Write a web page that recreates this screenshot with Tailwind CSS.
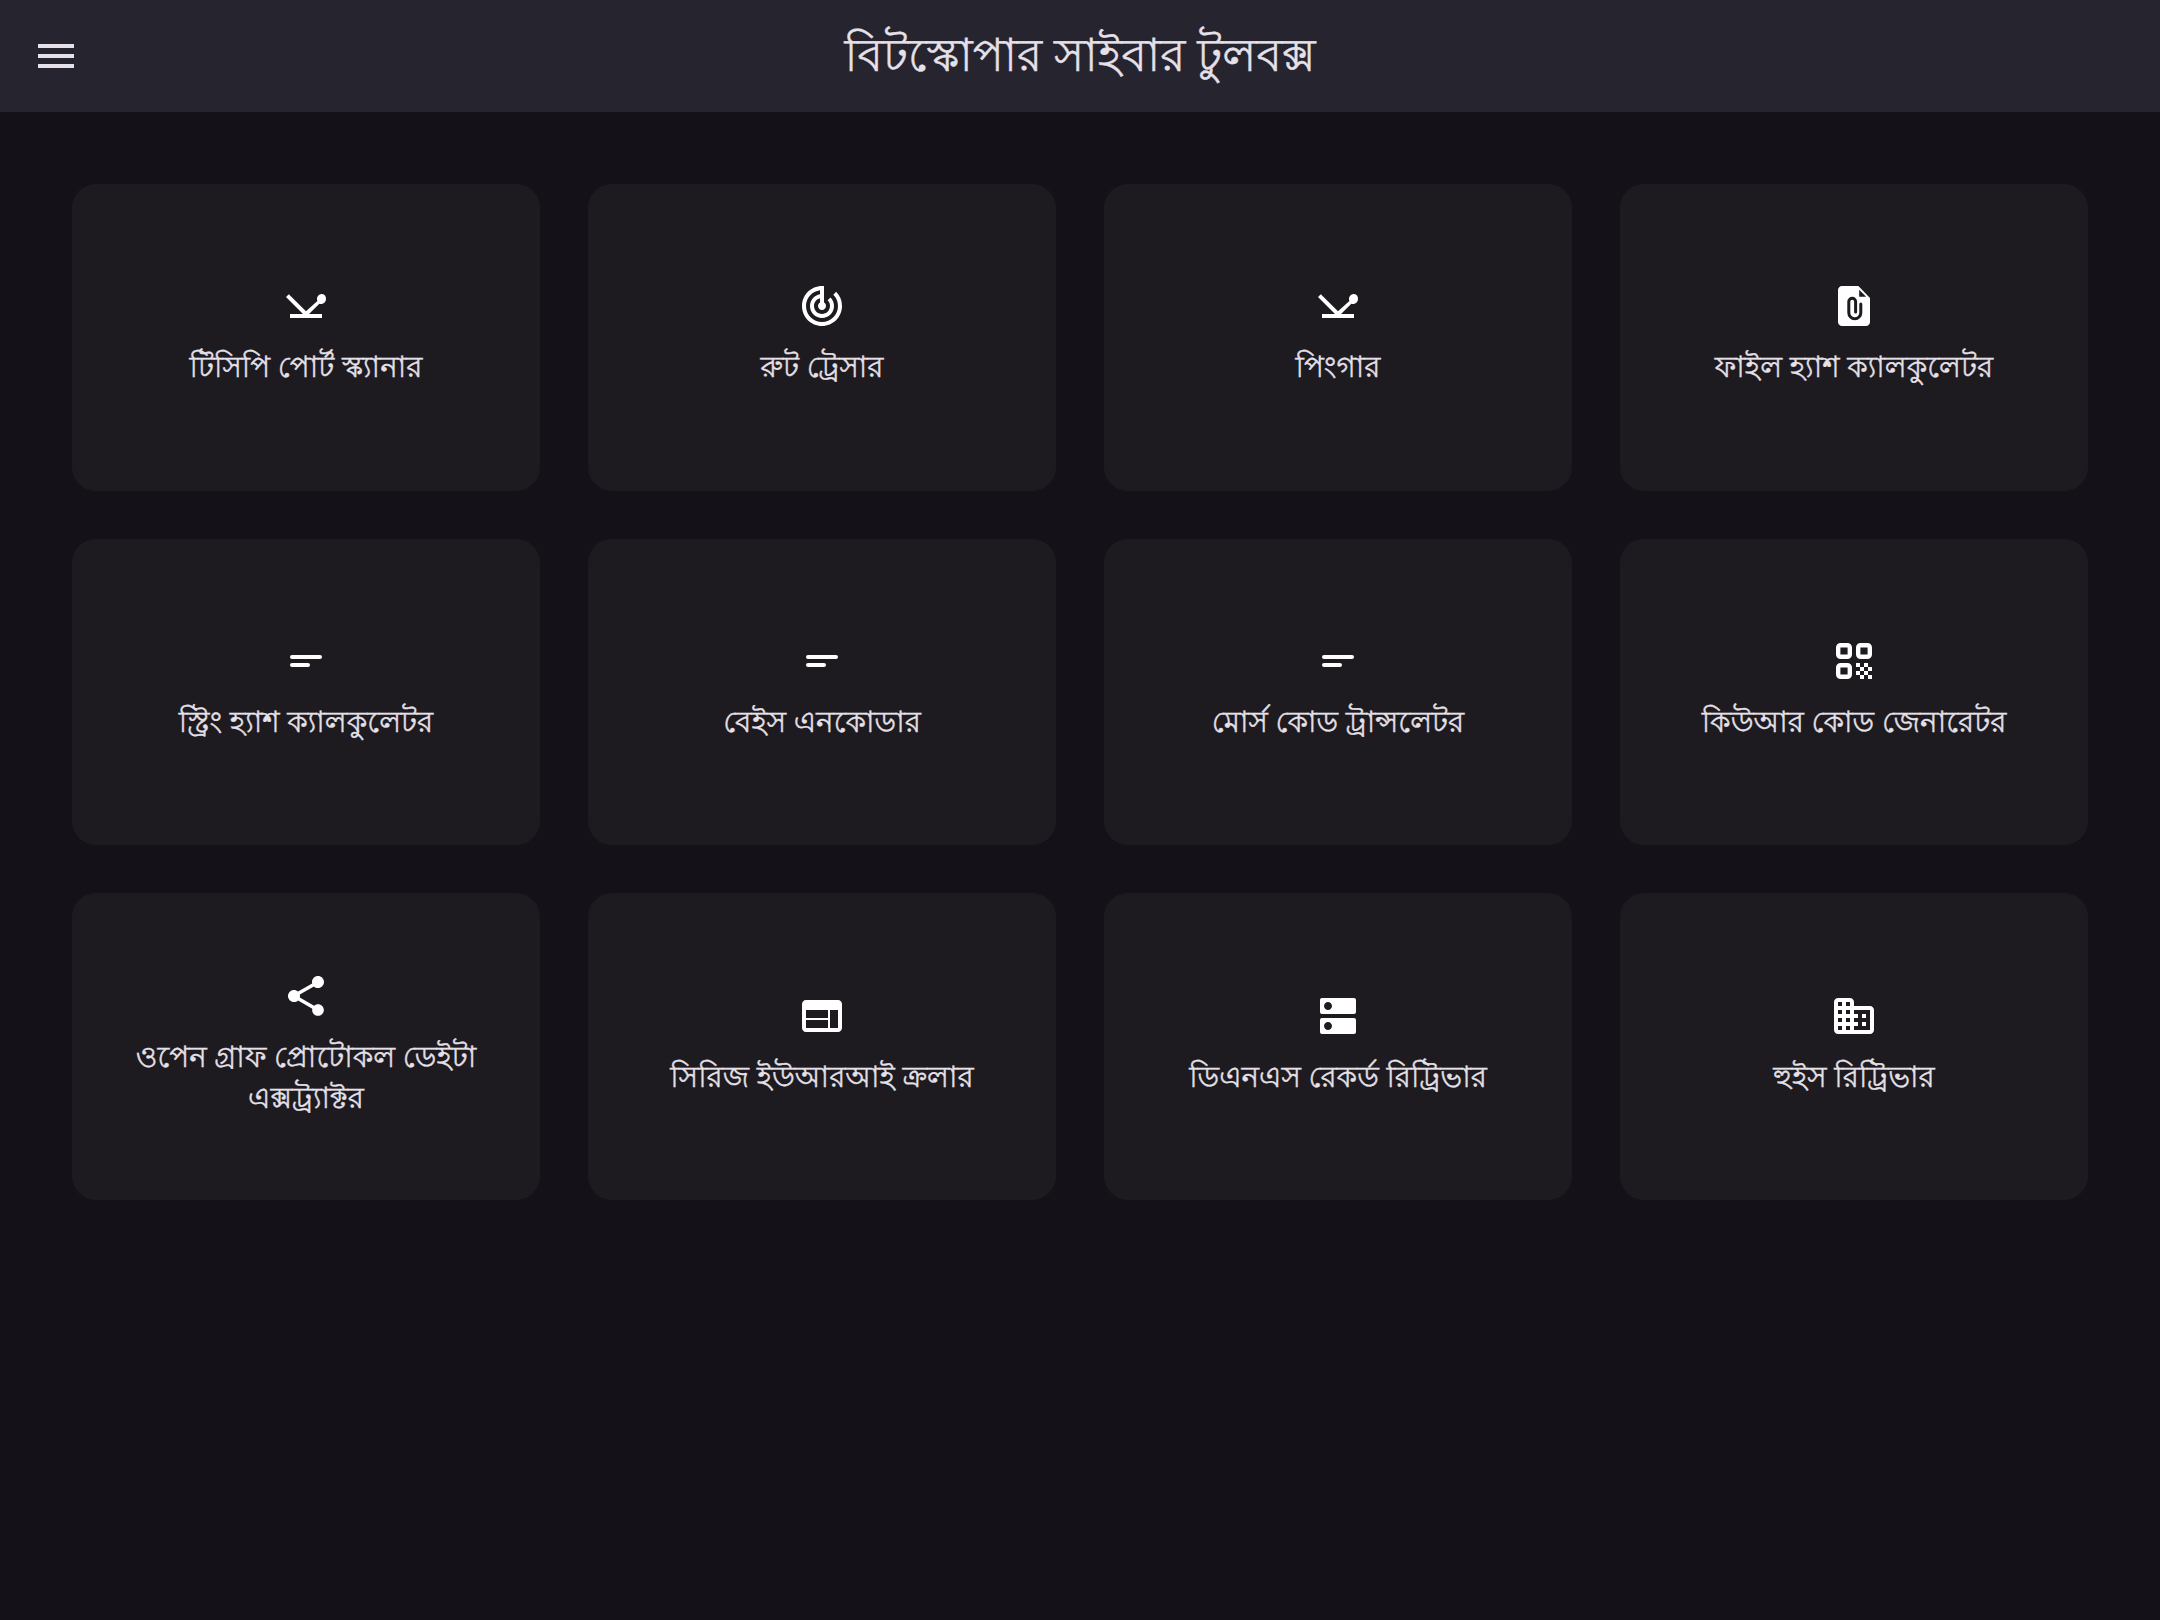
<!DOCTYPE html>
<html lang="bn">
<head>
  <meta charset="utf-8">
  <title>বিটস্কোপার সাইবার টুলবক্স</title>
  <script src="https://cdn.jsdelivr.net/npm/@tailwindcss/browser@4"></script>
</head>
<body class="min-h-[1620px] bg-[#141218] font-['Noto_Sans',sans-serif] text-[#e6e0e9] [text-rendering:geometricPrecision] [-webkit-text-stroke:0.4px]">

  <!-- top bar -->
  <header class="relative flex h-[112px] items-center justify-center bg-[#26242e]">
    <button class="absolute left-[38px] top-[44px] flex h-6 w-9 flex-col justify-between" aria-label="menu">
      <span class="h-1 w-full bg-[#e6e0e9]"></span>
      <span class="h-1 w-full bg-[#e6e0e9]"></span>
      <span class="h-1 w-full bg-[#e6e0e9]"></span>
    </button>
    <h1 class="pb-0.5 text-[45.8px] font-normal leading-none">বিটস্কোপার সাইবার টুলবক্স</h1>
  </header>

  <!-- tools -->
  <main class="grid grid-cols-4 gap-12 px-[72px] pt-[72px]">

    <a class="flex h-[306.5px] flex-col items-center justify-center gap-4 rounded-3xl bg-[#1d1b20] px-6 text-center text-[29.4px] leading-[41px]">
      <svg class="h-12 w-12 fill-white" viewBox="0 0 24 24"><path d="M12 14.67 3.41 6.09 2 7.5l8.5 8.5H4v2h16v-2h-6.5l5.15-5.15c.26.1.55.15.85.15 1.38 0 2.5-1.12 2.5-2.5S21.38 6 20 6s-2.5 1.12-2.5 2.5c0 .35.07.67.2.97L12 14.67z"/></svg>
      <span class="pb-1.5">টিসিপি পোর্ট স্ক্যানার</span>
    </a>

    <a class="flex h-[306.5px] flex-col items-center justify-center gap-4 rounded-3xl bg-[#1d1b20] px-6 text-center text-[29.4px] leading-[41px]">
      <svg class="h-12 w-12 fill-white" viewBox="0 0 24 24"><path d="M19.07 4.93l-1.41 1.41C19.1 7.79 20 9.79 20 12c0 4.42-3.58 8-8 8s-8-3.58-8-8c0-4.08 3.05-7.44 7-7.93v2.02C8.16 6.57 6 9.03 6 12c0 3.31 2.69 6 6 6s6-2.69 6-6c0-1.66-.67-3.16-1.76-4.24l-1.41 1.41C15.55 9.9 16 10.9 16 12c0 2.21-1.79 4-4 4s-4-1.79-4-4c0-1.86 1.28-3.41 3-3.86v2.14c-.6.35-1 .98-1 1.72 0 1.1.9 2 2 2s2-.9 2-2c0-.74-.4-1.38-1-1.72V2h-1C6.48 2 2 6.48 2 12s4.48 10 10 10 10-4.48 10-10c0-2.76-1.12-5.26-2.93-7.07z"/></svg>
      <span class="pb-1.5">রুট ট্রেসার</span>
    </a>

    <a class="flex h-[306.5px] flex-col items-center justify-center gap-4 rounded-3xl bg-[#1d1b20] px-6 text-center text-[29.4px] leading-[41px]">
      <svg class="h-12 w-12 fill-white" viewBox="0 0 24 24"><path d="M12 14.67 3.41 6.09 2 7.5l8.5 8.5H4v2h16v-2h-6.5l5.15-5.15c.26.1.55.15.85.15 1.38 0 2.5-1.12 2.5-2.5S21.38 6 20 6s-2.5 1.12-2.5 2.5c0 .35.07.67.2.97L12 14.67z"/></svg>
      <span class="pb-1.5">পিংগার</span>
    </a>

    <a class="flex h-[306.5px] flex-col items-center justify-center gap-4 rounded-3xl bg-[#1d1b20] px-6 text-center text-[29.4px] leading-[41px]">
      <svg class="h-12 w-12" viewBox="0 0 24 24">
        <path class="fill-white" d="M14.2 2H6C4.9 2 4 2.9 4 4v16c0 1.1.9 2 2 2h12c1.1 0 2-.9 2-2V8z"/>
        <path class="fill-[#1d1b20]" d="M14.6 3.9v3.5h3.5z"/>
        <path class="fill-none stroke-[#1d1b20]" stroke-width="1.5" stroke-linecap="round" d="M15.4 11v4.4a3 3 0 0 1-6 0V9.8a1.7 1.7 0 0 1 3.4 0V15"/>
      </svg>
      <span class="pb-1.5">ফাইল হ্যাশ ক্যালকুলেটর</span>
    </a>

    <a class="flex h-[306.5px] flex-col items-center justify-center gap-4 rounded-3xl bg-[#1d1b20] px-6 text-center text-[29.4px] leading-[41px]">
      <svg class="h-12 w-12 fill-white" viewBox="0 0 24 24"><rect x="4" y="9" width="16" height="2" rx="1"/><rect x="4" y="13" width="10" height="2" rx="1"/></svg>
      <span class="pb-1">স্ট্রিং হ্যাশ ক্যালকুলেটর</span>
    </a>

    <a class="flex h-[306.5px] flex-col items-center justify-center gap-4 rounded-3xl bg-[#1d1b20] px-6 text-center text-[29.4px] leading-[41px]">
      <svg class="h-12 w-12 fill-white" viewBox="0 0 24 24"><rect x="4" y="9" width="16" height="2" rx="1"/><rect x="4" y="13" width="10" height="2" rx="1"/></svg>
      <span class="pb-1">বেইস এনকোডার</span>
    </a>

    <a class="flex h-[306.5px] flex-col items-center justify-center gap-4 rounded-3xl bg-[#1d1b20] px-6 text-center text-[29.4px] leading-[41px]">
      <svg class="h-12 w-12 fill-white" viewBox="0 0 24 24"><rect x="4" y="9" width="16" height="2" rx="1"/><rect x="4" y="13" width="10" height="2" rx="1"/></svg>
      <span class="pb-1">মোর্স কোড ট্রান্সলেটর</span>
    </a>

    <a class="flex h-[306.5px] flex-col items-center justify-center gap-4 rounded-3xl bg-[#1d1b20] px-6 text-center text-[29.4px] leading-[41px]">
      <svg class="h-12 w-12" viewBox="0 0 24 24">
        <g class="fill-none stroke-white" stroke-width="2.2"><rect x="4.1" y="4.1" width="5.8" height="5.8" rx="1.2"/><rect x="14.1" y="4.1" width="5.8" height="5.8" rx="1.2"/><rect x="4.1" y="14.1" width="5.8" height="5.8" rx="1.2"/></g>
        <path class="fill-white" d="M19 19h2v2h-2zM13 13h2v2h-2zM15 15h2v2h-2zM13 17h2v2h-2zM15 19h2v2h-2zM17 17h2v2h-2zM17 13h2v2h-2zM19 15h2v2h-2z"/>
      </svg>
      <span class="pb-1">কিউআর কোড জেনারেটর</span>
    </a>

    <a class="flex h-[306.5px] flex-col items-center justify-center gap-4 rounded-3xl bg-[#1d1b20] px-6 text-center text-[29.4px] leading-[41px]">
      <svg class="h-12 w-12 fill-white" viewBox="0 0 24 24"><path d="M18 16.08c-.76 0-1.44.3-1.96.77L8.91 12.7c.05-.23.09-.46.09-.7s-.04-.47-.09-.7l7.05-4.11c.54.5 1.25.81 2.04.81 1.66 0 3-1.34 3-3s-1.34-3-3-3-3 1.34-3 3c0 .24.04.47.09.7L8.04 9.81C7.5 9.31 6.79 9 6 9c-1.66 0-3 1.34-3 3s1.34 3 3 3c.79 0 1.5-.31 2.04-.81l7.12 4.16c-.05.21-.08.43-.08.65 0 1.61 1.31 2.92 2.92 2.92s2.92-1.31 2.92-2.92-1.31-2.92-2.92-2.92z"/></svg>
      <span class="pb-0.5">ওপেন গ্রাফ প্রোটোকল ডেইটা এক্সট্র্যাক্টর</span>
    </a>

    <a class="flex h-[306.5px] flex-col items-center justify-center gap-4 rounded-3xl bg-[#1d1b20] px-6 text-center text-[29.4px] leading-[41px]">
      <svg class="h-12 w-12 fill-white" viewBox="0 0 24 24"><path d="M20 4H4c-1.1 0-1.99.9-1.99 2L2 18c0 1.1.9 2 2 2h16c1.1 0 2-.9 2-2V6c0-1.1-.9-2-2-2zm-5 14H4v-4h11v4zm0-5H4V9h11v4zm5 5h-4V9h4v9z"/></svg>
      <span class="pb-1">সিরিজ ইউআরআই ক্রলার</span>
    </a>

    <a class="flex h-[306.5px] flex-col items-center justify-center gap-4 rounded-3xl bg-[#1d1b20] px-6 text-center text-[29.4px] leading-[41px]">
      <svg class="h-12 w-12 fill-white" viewBox="0 0 24 24"><path d="M20 13H4c-.55 0-1 .45-1 1v6c0 .55.45 1 1 1h16c.55 0 1-.45 1-1v-6c0-.55-.45-1-1-1zM7 19c-1.1 0-2-.9-2-2s.9-2 2-2 2 .9 2 2-.9 2-2 2zM20 3H4c-.55 0-1 .45-1 1v6c0 .55.45 1 1 1h16c.55 0 1-.45 1-1V4c0-.55-.45-1-1-1zM7 9c-1.1 0-2-.9-2-2s.9-2 2-2 2 .9 2 2-.9 2-2 2z"/></svg>
      <span class="pb-1">ডিএনএস রেকর্ড রিট্রিভার</span>
    </a>

    <a class="flex h-[306.5px] flex-col items-center justify-center gap-4 rounded-3xl bg-[#1d1b20] px-6 text-center text-[29.4px] leading-[41px]">
      <svg class="h-12 w-12 fill-white" viewBox="0 0 24 24"><path fill-rule="evenodd" d="M12 7V5c0-1.1-.9-2-2-2H4c-1.1 0-2 .9-2 2v14c0 1.1.9 2 2 2h16c1.1 0 2-.9 2-2V9c0-1.1-.9-2-2-2h-8zM6 19H4v-2h2v2zm0-4H4v-2h2v2zm0-4H4V9h2v2zm0-4H4V5h2v2zm4 12H8v-2h2v2zm0-4H8v-2h2v2zm0-4H8V9h2v2zm0-4H8V5h2v2zm10 12h-8v-2h2v-2h-2v-2h2v-2h-2V9h8v10zm-2-8h-2v2h2v-2zm0 4h-2v2h2v-2z"/></svg>
      <span class="pb-1">হুইস রিট্রিভার</span>
    </a>

  </main>
</body>
</html>
